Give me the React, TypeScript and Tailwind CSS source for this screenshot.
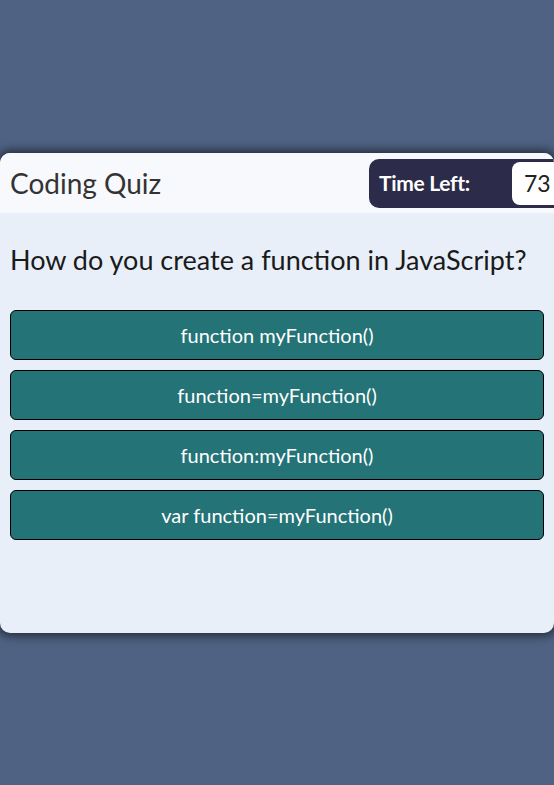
export default function App() {
    const answers = [
        "function myFunction()",
        "function=myFunction()",
        "function:myFunction()",
        "var function=myFunction()",
    ]

    return (
        <div
            className="min-h-[785px] bg-[#4f6283] pt-[153px]"
            style={{ fontFamily: "Lato, 'Open Sans', sans-serif" }}
        >
            <div className="flex h-[480px] w-full flex-col overflow-hidden rounded-[10px] bg-[#e8eff9] shadow-[0_0_10px_3px_rgba(0,0,0,0.55)]">
                <header className="flex h-[60px] items-center justify-between bg-[#f8f9fc] pl-[10px]">
                    <h1 className="text-[28px] leading-none text-[#333]">Coding Quiz</h1>
                    <div className="flex h-[49px] w-[185px] items-center rounded-l-[10px] bg-[#2c2b4a] pl-[10px]">
                        <span className="w-[133px] text-[21px] font-bold tracking-[-0.3px] text-white">Time Left:</span>
                        <span className="flex h-[43px] flex-1 items-center rounded-l-[8px] bg-white pl-[12px] text-[23px] text-[#222]">
                            73
                        </span>
                    </div>
                </header>
                <main className="flex flex-col px-[10px]">
                    <h2 className="mt-[28px] mb-[31px] text-[27px] leading-[38px] text-[#1a1a1a]">
                        How do you create a function in JavaScript?
                    </h2>
                    <div className="flex flex-col gap-[10px]">
                        {answers.map((a) => (
                            <button
                                key={a}
                                className="h-[50px] rounded-[6px] border border-black bg-[#237377] text-[20px] text-white"
                            >
                                {a}
                            </button>
                        ))}
                    </div>
                </main>
            </div>
        </div>
    )
}
